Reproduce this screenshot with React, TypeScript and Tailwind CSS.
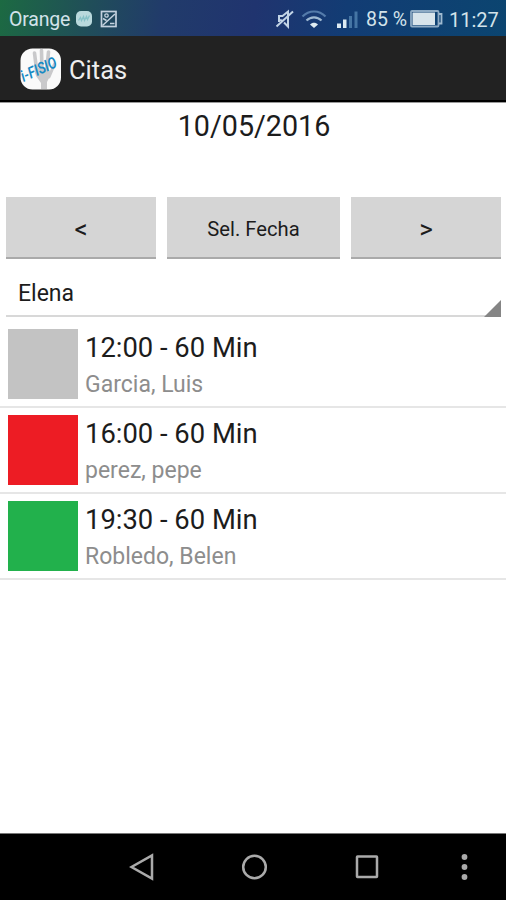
import React from 'react';

const appointments = [
    { time: '12:00 - 60 Min', name: 'Garcia, Luis', color: 'bg-[#c3c3c3]' },
    { time: '16:00 - 60 Min', name: 'perez, pepe', color: 'bg-[#ed1c24]' },
    { time: '19:30 - 60 Min', name: 'Robledo, Belen', color: 'bg-[#22b14c]' },
];

function StatusBar() {
    return (
        <div className="flex h-9 shrink-0 items-center bg-[linear-gradient(100deg,#1c6a42_0%,#204f58_17%,#213b6a_32%,#20346f_50%,#123c74_68%,#0b4570_100%)] pt-[3px] pl-[9px] pr-2 text-[20px] leading-none text-[#d3e3ea]">
            <span className="w-[62px] whitespace-nowrap text-[19.5px] tracking-[-0.2px]">Orange</span>
            <svg className="ml-1 shrink-0 -mt-0.5" width="18" height="18" viewBox="0 0 18 18">
                <rect x="1" y="1" width="16" height="15.5" rx="5" fill="#b9d9dc" />
                <path d="M3.5 10.5l2-3 1 3 2-4 1 4 2-4 1 3 2-4" fill="none" stroke="#86c1c6" strokeWidth="1.3" />
            </svg>
            <svg className="ml-[7px] shrink-0 -mt-0.5" width="18" height="18" viewBox="0 0 18 18" fill="none" stroke="#c4d2df" strokeWidth="1.7">
                <rect x="1.5" y="1.5" width="14.5" height="15" />
                <path d="M2.500 15.500L15 4M3 8.500l3.500 2M10 13.500h4.500" strokeWidth="1.5" />
                <circle cx="6.500" cy="5.500" r="1.700" strokeWidth="1.3" />
            </svg>
            <svg className="ml-auto shrink-0 -mt-0.5" width="19" height="20" viewBox="0 0 19 20" fill="none" stroke="#c2d4e6" strokeWidth="2">
                <path d="M4 13V7h3.500L13 2.500v15l-4-4" />
                <path d="M1.500 17.500L18 2.500M5 11l3 1" />
            </svg>
            <svg className="ml-[7px] shrink-0" width="26" height="20" viewBox="0 0 26 20" fill="none" strokeWidth="2.2">
                <path d="M1.5 6.500C8 -.2 18 -.2 24.500 6.500" stroke="#547baa" />
                <path d="M5.500 10.500c4.300-4.300 10.700-4.300 15 0" stroke="#9fb9d2" />
                <path d="M9 14.500c2.300-2.200 5.700-2.200 8 0L13 18z" fill="#e0edf3" stroke="none" />
            </svg>
            <svg className="ml-[9px] shrink-0" width="23" height="20" viewBox="0 0 23 20">
                <rect x="1" y="13.500" width="4" height="4.500" fill="#dceaf2" />
                <rect x="7" y="9.500" width="3.500" height="8.500" fill="#dceaf2" />
                <rect x="13" y="6" width="3" height="12" fill="#4575a4" />
                <rect x="18.500" y="1.500" width="3" height="16.500" fill="#4575a4" />
            </svg>
            <span className="ml-[7px] w-[44px] whitespace-nowrap text-[19.5px]">85 %</span>
            <svg className="-mt-0.5 shrink-0" width="33" height="18" viewBox="0 0 33 18">
                <rect x="1" y="1" width="27.500" height="15.500" rx="1" fill="none" stroke="#8eabc5" strokeWidth="1.800" />
                <rect x="2.500" y="2.500" width="22.500" height="12.500" fill="#d8e4eb" />
                <path d="M29 4h2.500v9.500H29" fill="none" stroke="#9fbad0" strokeWidth="1.800" />
            </svg>
            <span className="ml-1.5 w-[49px] whitespace-nowrap text-[20px]">11:27</span>
        </div>
    );
}

function AppLogo() {
    return (
        <svg className="shrink-0 overflow-visible" width="42" height="42" viewBox="0 0 42 42">
            <rect x=".5" y=".5" width="40.500" height="41" rx="12" fill="#fafafa" />
            <g fill="none" stroke="#c9c9cb" strokeLinecap="round">
                <path d="M14.500 5l2.500 20M21.500 2.500l.5 22M28.500 4l-2 20" strokeWidth="3.600" />
                <path d="M34.500 16l-5.500 13" strokeWidth="3" />
            </g>
            <path d="M14.500 20h14l2.500 6-4 8v7h-6v-6l-5-7z" fill="#c9c9cb" />
            <text x="0" y="0" transform="translate(3.500 34) rotate(-24)" textLength="38" lengthAdjust="spacingAndGlyphs" fontSize="16" fontStyle="italic" fontWeight="600" fill="#1689c4">i-FISIO</text>
        </svg>
    );
}

function NavigationBar() {
    return (
        <div className="flex h-[67px] shrink-0 items-center border-t border-[#777] bg-black pl-[129px] text-[#aaa]">
            <svg width="27" height="28" viewBox="0 0 27 28" fill="none" stroke="currentColor" strokeWidth="2.500">
                <path d="M23 2.500v23L2.500 14z" />
            </svg>
            <svg className="ml-[85px]" width="28" height="28" viewBox="0 0 28 28" fill="none" stroke="currentColor" strokeWidth="2.500">
                <circle cx="13.500" cy="14" r="11.300" />
            </svg>
            <svg className="ml-[85px]" width="26" height="28" viewBox="0 0 26 28" fill="none" stroke="currentColor" strokeWidth="2.500">
                <rect x="3" y="3.500" width="20" height="20.500" rx=".5" />
            </svg>
            <svg className="ml-[79px]" width="12" height="28" viewBox="0 0 12 28" fill="currentColor">
                <circle cx="5.500" cy="4" r="2.900" />
                <circle cx="5.500" cy="14" r="2.900" />
                <circle cx="5.500" cy="24" r="2.900" />
            </svg>
        </div>
    );
}

export default function App() {
    return (
        <div className="flex h-[900px] w-[506px] flex-col overflow-hidden bg-white font-['Roboto',sans-serif] text-[#1c1c1c]">
            <StatusBar />

            <div className="flex h-[66px] shrink-0 items-center border-b-2 border-black bg-[#222] pt-0.5 pl-5 shadow-[0_1px_0_#999]">
                <AppLogo />
                <h1 className="ml-[7px] mt-[3px] text-[25.5px] leading-none text-[#eee]">Citas</h1>
            </div>

            <div className="mt-[7px] h-[88px] shrink-0 text-center text-[28.7px] leading-[34px]">
                <span className="ml-0.5">10/05/2016</span>
            </div>

            <div className="flex h-[62px] shrink-0 gap-[11px] pl-1.5 pr-[5px] text-[20px]">
                <button className="w-[150px] border-b-2 border-[#aaa] bg-[#d5d5d5] pt-1 text-[26px]">&lt;</button>
                <button className="w-[173px] border-b-2 border-[#aaa] bg-[#d5d5d5] pt-1 text-[20.2px]">Sel. Fecha</button>
                <button className="w-[150px] border-b-2 border-[#aaa] bg-[#d5d5d5] pt-1 text-[26px]">&gt;</button>
            </div>

            <div className="ml-1.5 mr-[5px] flex h-[58px] shrink-0 items-end justify-between border-b-2 border-[#d8d8d8] pl-3">
                <span className="pb-2 text-[23px] leading-[27px]">Elena</span>
                <svg className="-mb-0.5" width="17" height="17" viewBox="0 0 17 17">
                    <path d="M17 0v17H0z" fill="#858585" />
                </svg>
            </div>

            <div className="mt-[5px] flex-1">
                {appointments.map((item) => (
                    <div key={item.time} className="flex h-[86px] border-b-2 border-[#e6e6e6] pl-2 pt-[7px]">
                        <div className={`size-[70px] shrink-0 ${item.color}`} />
                        <div className="ml-[7px] whitespace-nowrap">
                            <p className="mt-[3px] text-[27.4px] leading-8">{item.time}</p>
                            <p className="mt-[7px] text-[23px] leading-7 text-[#8d8d8d]">{item.name}</p>
                        </div>
                    </div>
                ))}
            </div>

            <NavigationBar />
        </div>
    );
}
